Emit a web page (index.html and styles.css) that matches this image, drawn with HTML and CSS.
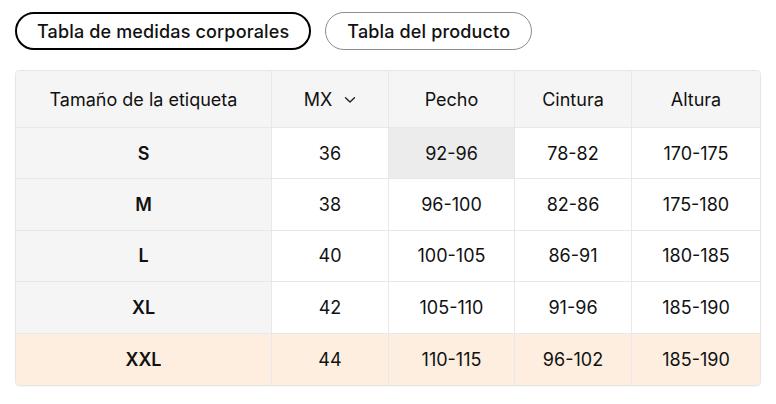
FILE: index.html
```html
<!DOCTYPE html>
<html lang="es">
<head>
<meta charset="utf-8">
<title>Tabla de medidas</title>
<link rel="stylesheet" href="styles.css">
</head>
<body>
<div class="page">
  <div class="tabs">
    <button class="tab active">Tabla de medidas corporales</button>
    <button class="tab">Tabla del producto</button>
  </div>
  <div class="table">
    <div class="cell head">Tamaño de la etiqueta</div>
    <div class="cell head">MX <svg class="chev" width="12" height="8" viewBox="0 0 12 8"><path d="M1.5 1.8 L6 6 L10.5 1.8" fill="none" stroke="#222" stroke-width="1.4" stroke-linecap="round" stroke-linejoin="round"/></svg></div>
    <div class="cell head">Pecho</div>
    <div class="cell head">Cintura</div>
    <div class="cell head last">Altura</div>

    <div class="cell size">S</div>
    <div class="cell">36</div>
    <div class="cell hl">92-96</div>
    <div class="cell">78-82</div>
    <div class="cell last">170-175</div>

    <div class="cell size">M</div>
    <div class="cell">38</div>
    <div class="cell">96-100</div>
    <div class="cell">82-86</div>
    <div class="cell last">175-180</div>

    <div class="cell size">L</div>
    <div class="cell">40</div>
    <div class="cell">100-105</div>
    <div class="cell">86-91</div>
    <div class="cell last">180-185</div>

    <div class="cell size">XL</div>
    <div class="cell">42</div>
    <div class="cell">105-110</div>
    <div class="cell">91-96</div>
    <div class="cell last">185-190</div>

    <div class="cell size sel bottom">XXL</div>
    <div class="cell sel bottom">44</div>
    <div class="cell sel bottom">110-115</div>
    <div class="cell sel bottom">96-102</div>
    <div class="cell sel bottom last">185-190</div>
  </div>
</div>
</body>
</html>
```

FILE: styles.css
```css
* { box-sizing: border-box; }
html, body { margin: 0; padding: 0; background: #fff; }
body {
  font-family: Inter, "Noto Sans", "Liberation Sans", sans-serif;
  color: #111;
}
.page {
  padding: 12px 15px;
}
.tabs {
  display: flex;
  gap: 14px;
  margin-bottom: 20px;
}
.tab {
  height: 38px;
  padding: 0 21px;
  border-radius: 19px;
  border: 1px solid #8c8c8c;
  background: #fff;
  font-family: inherit;
  font-size: 18px;
  letter-spacing: 0.15px;
  font-weight: 500;
  color: #111;
  cursor: pointer;
}
.tab.active {
  border: 2px solid #000;
  padding: 0 20px;
}
.table {
  width: 746px;
  border: 1px solid #e6e6e6;
  border-radius: 4px;
  overflow: hidden;
  display: grid;
  grid-template-columns: 256px 117px 126px 117px 1fr;
  grid-template-rows: 57px repeat(5, 51.4px);
  box-shadow: 0 1px 1px rgba(0,0,0,0.04);
}
.cell {
  display: flex;
  align-items: center;
  justify-content: center;
  border-right: 1px solid #e8e8e8;
  border-bottom: 1px solid #e8e8e8;
  font-size: 18px;
  color: #111;
  background: #fff;
}
.cell.last { border-right: none; }
.cell.bottom { border-bottom: none; }
.head { background: #f5f5f5; }
.size { background: #f5f5f5; font-weight: 600; }
.hl { background: #ececec; }
.sel { background: #fdeee0; }
.chev { margin-left: 12px; margin-top: 1px; }
```
